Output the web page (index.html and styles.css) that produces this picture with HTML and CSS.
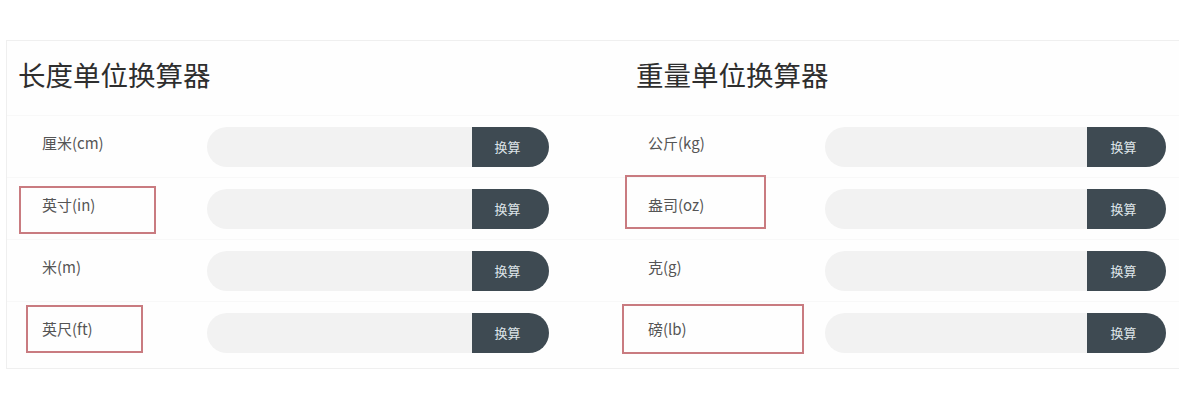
FILE: index.html
```html
<!DOCTYPE html>
<html lang="zh">
<head>
<meta charset="utf-8">
<link rel="stylesheet" href="styles.css">
</head>
<body>
<div class="card">
  <section class="col">
    <h2 class="title">长度单位换算器</h2>
    <div class="row"><div class="label">厘米(cm)</div><div class="field"><div class="input"></div><button class="btn">换算</button></div></div>
    <div class="row"><div class="label">英寸(in)</div><div class="field"><div class="input"></div><button class="btn">换算</button></div></div>
    <div class="row"><div class="label">米(m)</div><div class="field"><div class="input"></div><button class="btn">换算</button></div></div>
    <div class="row"><div class="label">英尺(ft)</div><div class="field"><div class="input"></div><button class="btn">换算</button></div></div>
  </section>
  <section class="col right">
    <h2 class="title">重量单位换算器</h2>
    <div class="row"><div class="label">公斤(kg)</div><div class="field"><div class="input"></div><button class="btn">换算</button></div></div>
    <div class="row"><div class="label">盎司(oz)</div><div class="field"><div class="input"></div><button class="btn">换算</button></div></div>
    <div class="row"><div class="label">克(g)</div><div class="field"><div class="input"></div><button class="btn">换算</button></div></div>
    <div class="row"><div class="label">磅(lb)</div><div class="field"><div class="input"></div><button class="btn">换算</button></div></div>
  </section>
</div>
<div class="mark m1"></div>
<div class="mark m2"></div>
<div class="mark m3"></div>
<div class="mark m4"></div>
</body>
</html>
```
FILE: styles.css
```css
html, body {
  margin: 0;
  padding: 0;
  background: #ffffff;
}
body {
  position: relative;
  width: 1179px;
  height: 400px;
  overflow: hidden;
  font-family: "Noto Sans CJK SC", "Noto Sans", sans-serif;
  color: #444;
}
.card {
  margin: 40px 0 0 6px;
  border: 1px solid #efefef;
  border-right: none;
  display: grid;
  grid-template-columns: 618px 1fr;
  padding-bottom: 5px;
  background: #fefefe;
}
.col {
  display: flex;
  flex-direction: column;
}
.title {
  margin: 0;
  padding: 17px 0 25px 11px;
  font-size: 27.5px;
  line-height: 32px;
  font-weight: 400;
  color: #2e2e2e;
}
.right .title {
  padding-left: 11px;
}
.row {
  height: 62px;
  display: flex;
  align-items: center;
  border-top: 1px solid #f8f8f8;
  box-sizing: border-box;
}
.label {
  width: 165px;
  padding-left: 35px;
  padding-bottom: 8px;
  font-size: 15px;
  color: #555;
}
.right .label {
  width: 177px;
  padding-left: 23px;
}
.field {
  display: flex;
  height: 40px;
}
.input {
  width: 265px;
  height: 40px;
  background: #f2f2f2;
  border-radius: 20px 0 0 20px;
}
.right .input {
  width: 262px;
}
.btn {
  width: 77px;
  height: 40px;
  border: none;
  margin: 0;
  padding: 0 6px 0 0;
  background: #3e4a52;
  color: #dde4e8;
  font-family: "Noto Sans CJK SC", sans-serif;
  font-size: 13px;
  border-radius: 0 20px 20px 0;
}
.right .btn {
  width: 79px;
}
.mark {
  position: absolute;
  border: 2px solid #c97b80;
  box-sizing: border-box;
}
.m1 { left: 19px; top: 186px; width: 137px; height: 48px; }
.m2 { left: 26px; top: 305px; width: 117px; height: 48px; }
.m3 { left: 625px; top: 175px; width: 141px; height: 54px; }
.m4 { left: 622px; top: 304px; width: 182px; height: 50px; }
```
